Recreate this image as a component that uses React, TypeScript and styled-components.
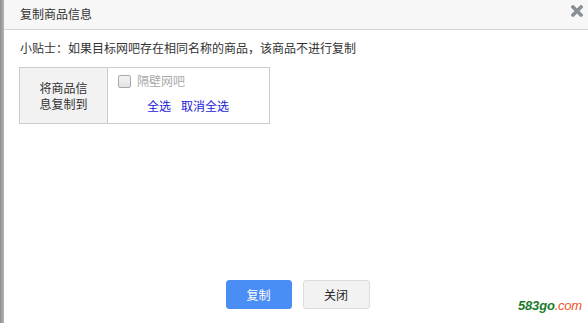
import React from "react";
import styled, { createGlobalStyle } from "styled-components";

const Global = createGlobalStyle`
  html, body { margin: 0; padding: 0; width: 588px; height: 323px; overflow: hidden; }
  body { font-family: "Noto Sans CJK SC", "Liberation Sans", sans-serif; background: #fff; }
  #root { width: 588px; height: 323px; }
`;

const Page = styled.div`
  display: flex;
  width: 588px;
  height: 323px;
`;

const Backdrop = styled.div`
  width: 4px;
  flex: none;
  background: linear-gradient(to right, #8f8f8f, #b5b5b5);
`;

const Dialog = styled.div`
  position: relative;
  flex: 1;
  display: flex;
  flex-direction: column;
  background: #fff;
`;

const Header = styled.div`
  height: 29px;
  flex: none;
  display: flex;
  align-items: center;
  justify-content: space-between;
  padding: 0 5px 0 16px;
  background: #f7f7f7;
  border-bottom: 1px solid #d4d4d4;
`;

const Title = styled.span`
  font-size: 12px;
  color: #333;
  margin-top: -2px;
`;

const Close = styled.button`
  border: none;
  background: none;
  padding: 0;
  width: 12px;
  height: 12px;
  margin-top: -7px;
  display: flex;
  cursor: pointer;
`;

const Body = styled.div`
  flex: 1;
  padding: 9px 16px 0 16px;
  display: flex;
  flex-direction: column;
`;

const Tip = styled.p`
  margin: 0;
  font-size: 12px;
  line-height: 18px;
  color: #333;
`;

const Table = styled.div`
  margin-top: 10px;
  display: flex;
  width: 249px;
  height: 55px;
  border: 1px solid #cccccc;
  margin-left: -1px;
`;

const LabelCell = styled.div`
  width: 88px;
  flex: none;
  display: flex;
  align-items: center;
  justify-content: center;
  text-align: center;
  background: #f2f2f2;
  border-right: 1px solid #cccccc;
  font-size: 12px;
  line-height: 16px;
  color: #333;
  padding: 0 18px;
  box-sizing: border-box;
`;

const ValueCell = styled.div`
  flex: 1;
  display: flex;
  flex-direction: column;
  padding: 5px 0 0 10px;
`;

const CheckRow = styled.label`
  display: flex;
  align-items: center;
  gap: 6px;
  font-size: 12px;
  line-height: 16px;
  color: #aaa;
`;

const Box = styled.span`
  width: 11px;
  height: 11px;
  border: 1px solid #a9a9a9;
  border-radius: 2px;
  background: linear-gradient(#f4f4f4, #e2e2e2);
`;

const Links = styled.div`
  display: flex;
  gap: 10px;
  padding-left: 29px;
  margin-top: 9px;
`;

const Link = styled.a`
  font-size: 12px;
  line-height: 16px;
  color: #1a1ad6;
  text-decoration: none;
  cursor: pointer;
`;

const Footer = styled.div`
  flex: none;
  display: flex;
  justify-content: center;
  gap: 11px;
  padding: 0 0 14px 3px;
`;

const Button = styled.button<{ $primary?: boolean }>`
  width: ${(p) => (p.$primary ? "66px" : "67px")};
  height: 29px;
  box-sizing: border-box;
  border-radius: 3px;
  font-family: inherit;
  font-size: 12px;
  cursor: pointer;
  border: 1px solid ${(p) => (p.$primary ? "#4a8ef5" : "#dcdcdc")};
  background: ${(p) => (p.$primary ? "#4a8ef5" : "#f2f2f2")};
  color: ${(p) => (p.$primary ? "#fff" : "#222")};
`;

const Watermark = styled.div`
  position: absolute;
  right: 6px;
  bottom: 10px;
  font-family: "Liberation Sans", sans-serif;
  font-style: italic;
  font-size: 13px;
  font-weight: bold;
  letter-spacing: -0.2px;
`;

const Green = styled.span`
  color: #1b7a2c;
`;

const Orange = styled.span`
  color: #f0532a;
  font-weight: normal;
`;

export default function App() {
  return (
    <>
      <Global />
      <Page>
        <Backdrop />
        <Dialog>
          <Header>
            <Title>复制商品信息</Title>
            <Close aria-label="关闭">
              <svg width="12" height="12" viewBox="0 0 12 12">
                <path d="M2 2 L10 10 M10 2 L2 10" stroke="#8a8f96" strokeWidth="3.5" strokeLinecap="square" />
              </svg>
            </Close>
          </Header>
          <Body>
            <Tip>小贴士：如果目标网吧存在相同名称的商品，该商品不进行复制</Tip>
            <Table>
              <LabelCell>将商品信息复制到</LabelCell>
              <ValueCell>
                <CheckRow>
                  <Box />
                  隔壁网吧
                </CheckRow>
                <Links>
                  <Link>全选</Link>
                  <Link>取消全选</Link>
                </Links>
              </ValueCell>
            </Table>
          </Body>
          <Footer>
            <Button $primary>复制</Button>
            <Button>关闭</Button>
          </Footer>
          <Watermark>
            <Green>583go</Green>
            <Orange>.com</Orange>
          </Watermark>
        </Dialog>
      </Page>
    </>
  );
}
